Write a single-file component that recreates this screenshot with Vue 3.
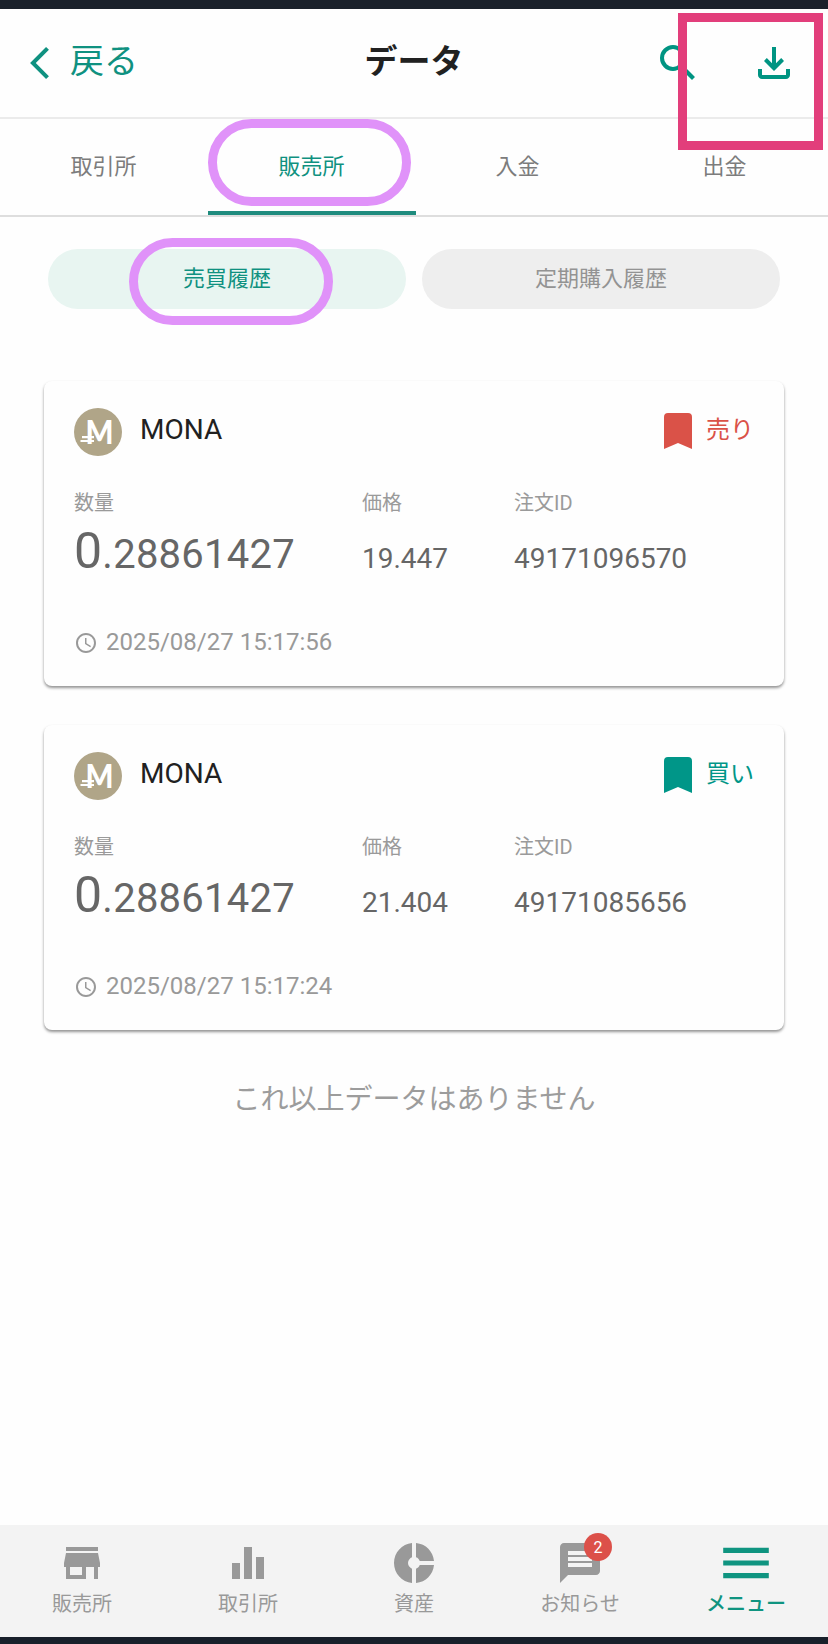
<template>
  <div class="page">
    <div class="status-bar"></div>

    <header class="header">
      <a class="back">
        <svg class="back-icon" viewBox="5.84 2.1 11.67 19.8">
          <path d="M17.51 3.87 15.73 2.1 5.84 12l9.9 9.9 1.77-1.77L9.38 12z" />
        </svg>
        <span>戻る</span>
      </a>
      <h1 class="title">データ</h1>
      <div class="header-actions">
        <svg viewBox="0 0 24 24">
          <path d="M15.5 14h-.79l-.28-.27A6.47 6.47 0 0 0 16 9.5 6.5 6.5 0 1 0 9.5 16c1.61 0 3.09-.59 4.23-1.57l.27.28v.79l5 4.99L20.49 19zm-6 0a4.5 4.5 0 1 1 0-9 4.5 4.5 0 0 1 0 9z" />
        </svg>
        <svg viewBox="0 0 24 24">
          <path d="m12 16-5-5 1.4-1.45 2.6 2.6V4h2v8.15l2.6-2.6L17 11zm-6 4q-.825 0-1.412-.587Q4 18.825 4 18v-3h2v3h12v-3h2v3q0 .825-.587 1.413Q18.825 20 18 20z" />
        </svg>
      </div>
    </header>

    <nav class="tabs">
      <div
        v-for="t in tabs"
        :key="t"
        class="tab"
        :class="{ active: t === activeTab }"
        @click="activeTab = t"
      >
        {{ t }}
      </div>
    </nav>

    <div class="pills">
      <button
        v-for="p in pills"
        :key="p"
        class="pill"
        :class="{ active: p === activePill }"
        @click="activePill = p"
      >
        {{ p }}
      </button>
    </div>

    <main class="list">
      <div v-for="o in orders" :key="o.id" class="card">
        <div class="card-head">
          <svg class="coin" viewBox="0 0 48 48">
            <circle cx="24" cy="24" r="24" fill="#b0a588" />
            <text
              x="11.5"
              y="35.5"
              textLength="28"
              lengthAdjust="spacingAndGlyphs"
              class="coin-letter"
            >M</text>
            <path d="M8 29.2h12M6.5 33h13.5" stroke="#fff" stroke-width="2.2" />
          </svg>
          <span class="coin-name">{{ o.coin }}</span>
          <div class="side" :class="o.side">
            <svg viewBox="0 0 28 36">
              <path d="M4 0h20a4 4 0 0 1 4 4v32l-14-6-14 6V4a4 4 0 0 1 4-4z" />
            </svg>
            <span>{{ o.side === "sell" ? "売り" : "買い" }}</span>
          </div>
        </div>

        <div class="fields">
          <div>
            <div class="label">数量</div>
            <div class="value amount"><span>0</span>{{ o.amount.slice(1) }}</div>
          </div>
          <div>
            <div class="label">価格</div>
            <div class="value">{{ o.price }}</div>
          </div>
          <div>
            <div class="label">注文ID</div>
            <div class="value">{{ o.id }}</div>
          </div>
        </div>

        <div class="date">
          <svg viewBox="0 0 24 24">
            <path d="M11.99 2C6.47 2 2 6.48 2 12s4.47 10 9.99 10C17.52 22 22 17.52 22 12S17.52 2 11.99 2zM12 20a8 8 0 1 1 0-16 8 8 0 0 1 0 16zm.5-13H11v6l5.25 3.15.75-1.23-4.5-2.67z" />
          </svg>
          <span>{{ o.date }}</span>
        </div>
      </div>

      <p class="no-more">これ以上データはありません</p>
    </main>

    <footer class="bottom-nav">
      <div
        v-for="n in navItems"
        :key="n.label"
        class="nav-item"
        :class="{ active: n.active }"
      >
        <div class="nav-icon">
          <svg viewBox="0 0 24 24"><path :d="n.icon" /></svg>
          <span v-if="n.badge" class="badge">{{ n.badge }}</span>
        </div>
        <span>{{ n.label }}</span>
      </div>
    </footer>
    <div class="bottom-bar"></div>

    <div class="mark mark-tab"></div>
    <div class="mark mark-pill"></div>
    <div class="mark mark-download"></div>
  </div>
</template>

<script setup>
import { ref } from "vue"

const tabs = ["取引所", "販売所", "入金", "出金"]
const activeTab = ref("販売所")

const pills = ["売買履歴", "定期購入履歴"]
const activePill = ref("売買履歴")

const orders = ref([
  {
    id: "49171096570",
    coin: "MONA",
    side: "sell",
    amount: "0.28861427",
    price: "19.447",
    date: "2025/08/27 15:17:56",
  },
  {
    id: "49171085656",
    coin: "MONA",
    side: "buy",
    amount: "0.28861427",
    price: "21.404",
    date: "2025/08/27 15:17:24",
  },
])

const navItems = [
  {
    label: "販売所",
    icon: "M20 4H4v2h16V4zm1 10v-2l-1-5H4l-1 5v2h1v6h10v-6h4v6h2v-6h1zm-9 4H6v-4h6v4z",
  },
  {
    label: "取引所",
    icon: "M10 20h4V4h-4v16zm-6 0h4v-8H4v8zM16 9v11h4V9h-4z",
  },
  {
    label: "資産",
    icon: "M11 9.16V2c-5 .5-9 4.79-9 10s4 9.5 9 10v-7.16c-1-.41-2-1.52-2-2.84s1-2.43 2-2.84zM14.86 11H22c-.48-4.75-4-8.53-9-9v7.16c1 .3 1.52.98 1.86 1.84zM13 14.84V22c5-.47 8.52-4.25 9-9h-7.14c-.34.86-.86 1.54-1.86 1.84z",
  },
  {
    label: "お知らせ",
    icon: "M20 2H4c-1.1 0-1.99.9-1.99 2L2 22l4-4h14c1.1 0 2-.9 2-2V4c0-1.1-.9-2-2-2zm-2 12H6v-2h12v2zm0-3H6V9h12v2zm0-3H6V6h12v2z",
    badge: 2,
  },
  {
    label: "メニュー",
    icon: "M.6 4.4h22.8V7H.6zM.6 10.7h22.8v2.6H.6zM.6 17h22.8v2.6H.6z",
    active: true,
  },
]
</script>

<style>
body {
  background: #fefefe;
}
</style>

<style scoped>
.page {
  position: relative;
  display: flex;
  flex-direction: column;
  height: 1644px;
  overflow: hidden;
  box-sizing: border-box;
  background: #fefefe;
  font-family: Roboto, "Noto Sans CJK JP", sans-serif;
}
.page svg {
  display: block;
  fill: currentColor;
}
.status-bar {
  height: 9px;
  background: #1b212b;
}
.header {
  display: grid;
  grid-template-columns: 1fr auto 1fr;
  align-items: center;
  height: 110px;
  padding: 0 30px;
  box-sizing: border-box;
  border-bottom: 2px solid #ebebeb;
}
.back {
  display: flex;
  align-items: center;
  gap: 21px;
  color: #0f9180;
  font-size: 34px;
  line-height: 40px;
}
.back span {
  padding-bottom: 4px;
}
.back-icon {
  width: 19px;
  height: 32px;
}
.title {
  margin: 0;
  padding-bottom: 3px;
  font-size: 33px;
  line-height: 40px;
  font-weight: 700;
  color: #212121;
}
.header-actions {
  display: flex;
  justify-content: flex-end;
  gap: 48px;
  color: #009482;
}
.header-actions svg {
  width: 48px;
  height: 48px;
}
.tabs {
  display: flex;
  height: 98px;
  box-sizing: border-box;
  border-bottom: 2px solid #dedede;
}
.tab {
  flex: 1;
  box-sizing: border-box;
  padding-top: 32px;
  text-align: center;
  font-size: 22px;
  line-height: 32px;
  color: #7c7c7c;
}
.tab.active {
  margin: 0 -2px 0 1px;
  padding-right: 1px;
  color: #0f9180;
  border-bottom: 4px solid #1f8c7e;
}
.pills {
  display: flex;
  gap: 16px;
  padding: 32px 48px 0;
}
.pill {
  flex: 1;
  height: 60px;
  border: none;
  border-radius: 30px;
  padding: 0 0 6px;
  background: #eee;
  color: #939393;
  font-family: inherit;
  font-size: 22px;
}
.pill.active {
  background: #e8f5f1;
  color: #0f9180;
}
.list {
  flex: 1;
  padding: 72px 44px 0;
}
.card {
  height: 305px;
  box-sizing: border-box;
  margin-bottom: 39px;
  padding: 27px 30px 0;
  border-radius: 8px;
  background: #fefefe;
  box-shadow: 0 2px 3px rgba(0, 0, 0, 0.42);
}
.card-head {
  display: flex;
  align-items: center;
  height: 48px;
}
.coin {
  width: 48px;
  height: 48px;
}
.coin-letter {
  font: 900 33px Lato, sans-serif;
  fill: #fff;
}
.coin-name {
  flex: 1;
  padding: 0 0 5px 18px;
  font-size: 28px;
  color: #212121;
}
.side {
  display: flex;
  align-items: center;
  gap: 14px;
  padding-bottom: 2px;
  font-size: 24px;
  line-height: 30px;
}
.side svg {
  width: 28px;
  height: 36px;
}
.side span {
  padding-bottom: 2px;
}
.sell {
  color: #da5248;
}
.buy {
  color: #009688;
}
.fields {
  display: grid;
  grid-template-columns: 288px 152px 1fr;
  padding-top: 33px;
}
.label {
  font-size: 20px;
  line-height: 28px;
  color: #9a9a9a;
}
.value {
  height: 56px;
  box-sizing: border-box;
  padding-top: 14px;
  line-height: 56px;
  font-size: 28px;
  color: #666;
}
.amount {
  padding-top: 6px;
  font-size: 40px;
  letter-spacing: 0.25px;
}
.amount span {
  font-size: 50px;
}
.date {
  display: flex;
  align-items: center;
  gap: 8px;
  padding-top: 55px;
  font-size: 24px;
  line-height: 28px;
  color: #999;
}
.date svg {
  width: 24px;
  height: 24px;
  margin-top: 2px;
}
.no-more {
  margin: 0;
  padding-top: 11px;
  text-align: center;
  font-size: 28px;
  line-height: 40px;
  color: #9c9c9c;
}
.bottom-nav {
  display: flex;
  height: 112px;
  box-sizing: border-box;
  margin: 0 -1px;
  padding-top: 14px;
  background: #f3f3f3;
}
.nav-item {
  flex: 1;
  display: flex;
  flex-direction: column;
  align-items: center;
  font-size: 20px;
  line-height: 34px;
  color: #999;
}
.nav-item.active {
  color: #0f9480;
  font-weight: 500;
}
.nav-icon {
  position: relative;
}
.nav-icon svg {
  width: 48px;
  height: 48px;
}
.badge {
  position: absolute;
  left: 28px;
  top: -6px;
  width: 28px;
  height: 28px;
  border-radius: 50%;
  background: #dc5049;
  color: #fff;
  font-size: 16px;
  line-height: 29px;
  text-align: center;
}
.bottom-bar {
  height: 7px;
  background: #18202a;
}
/* highlight frames over the screen */
.mark {
  position: absolute;
  box-sizing: border-box;
  pointer-events: none;
}
.mark-tab {
  left: 208px;
  top: 119px;
  width: 203px;
  height: 87px;
  border: 9px solid #e092f9;
  border-radius: 44px;
}
.mark-pill {
  left: 129px;
  top: 238px;
  width: 204px;
  height: 87px;
  border: 9px solid #e092f9;
  border-radius: 44px;
}
.mark-download {
  left: 678px;
  top: 13px;
  width: 145px;
  height: 137px;
  border: 9px solid #e23e7b;
}
</style>
